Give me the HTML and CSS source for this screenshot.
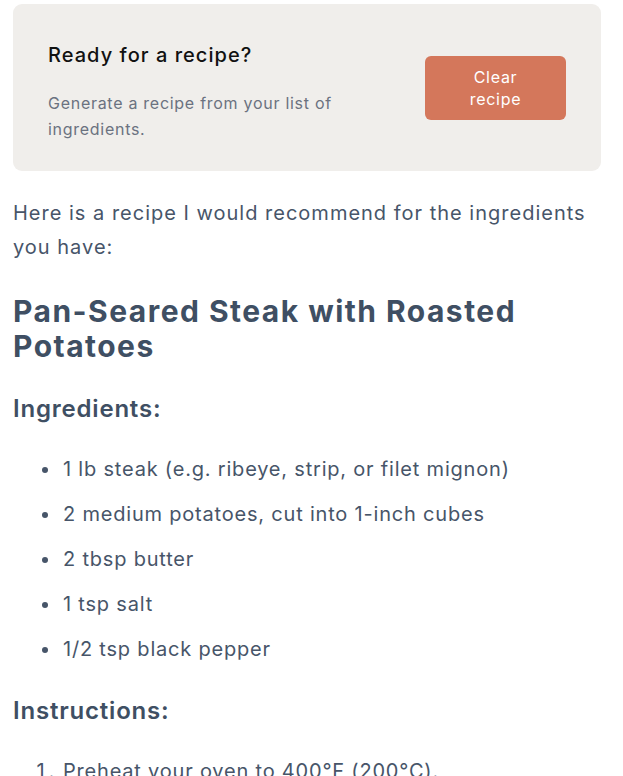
FILE: index.html
```html
<!DOCTYPE html>
<html lang="en">
<head>
<meta charset="utf-8">
<link rel="stylesheet" href="styles.css">
</head>
<body>
<main class="page">
  <section class="card">
    <div class="card-text">
      <h1 class="card-title">Ready for a recipe?</h1>
      <p class="card-sub">Generate a recipe from your list of ingredients.</p>
    </div>
    <button class="clear-btn">Clear recipe</button>
  </section>
  <article class="prose">
    <p>Here is a recipe I would recommend for the ingredients you have:</p>
    <h2>Pan-Seared Steak with Roasted Potatoes</h2>
    <h3>Ingredients:</h3>
    <ul>
      <li>1 lb steak (e.g. ribeye, strip, or filet mignon)</li>
      <li>2 medium potatoes, cut into 1-inch cubes</li>
      <li>2 tbsp butter</li>
      <li>1 tsp salt</li>
      <li>1/2 tsp black pepper</li>
    </ul>
    <h3>Instructions:</h3>
    <ol>
      <li>Preheat your oven to 400°F (200°C).</li>
      <li>Season the steak with salt and pepper.</li>
    </ol>
  </article>
</main>
</body>
</html>
```
FILE: styles.css
```css
html, body { margin: 0; padding: 0; background: #fff; }
body { font-family: Inter, "Noto Sans", sans-serif; letter-spacing: 0.05em; }
.page { padding: 4px 22px 0 13px; }
.card {
  background: #f0eeeb;
  border-radius: 9px;
  height: 167px;
  box-sizing: border-box;
  padding: 0 35px;
  display: flex;
  align-items: center;
  justify-content: space-between;
}
.card-text { width: 320px; padding-top: 8px; }
.card-title { margin: 0 0 21px; font-size: 20px; font-weight: 500; line-height: 28px; color: #111; letter-spacing: 0.052em; }
.card-sub { margin: 0; font-size: 16px; line-height: 26px; color: #6b7280; letter-spacing: 0.045em; }
.clear-btn {
  width: 141px; height: 64px;
  background: #d4775b; color: #fff;
  border: none; border-radius: 6px;
  font-family: inherit; font-size: 16px; line-height: 22px; letter-spacing: 0.045em;
  padding: 0 34px;
}
.prose { color: #475569; font-size: 20px; line-height: 34px; }
.prose p { margin: 25px 0 0; letter-spacing: 0.05em; }
.prose h2 { margin: 30px 0 0; font-size: 30px; line-height: 35px; font-weight: 700; color: #3f4f63; letter-spacing: 0.049em; }
.prose h3 { margin: 28px 0 0; font-size: 24px; line-height: 34px; font-weight: 600; color: #3f4f63; }
.prose ul, .prose ol { margin: 26px 0 0; padding-left: 48px; }
.prose li { margin: 0 0 11px; padding-left: 2px; }
.prose li::marker { color: #475569; }
```
